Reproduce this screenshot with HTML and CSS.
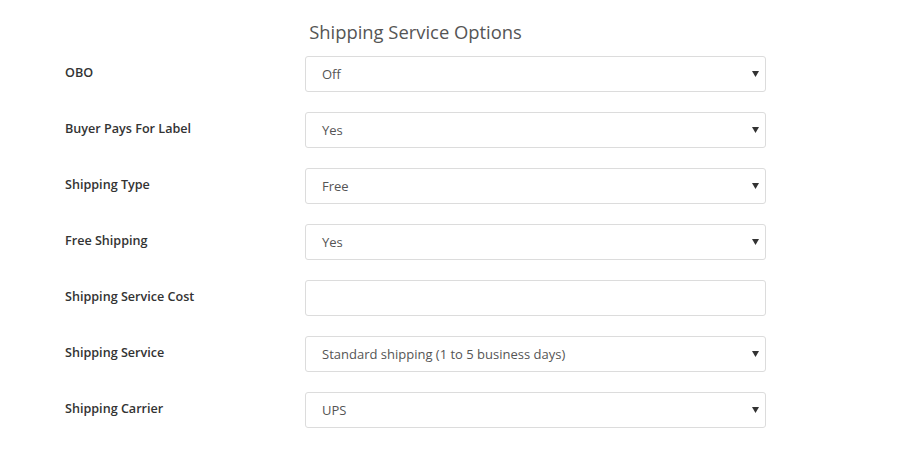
FILE: index.html
```
<!DOCTYPE html>
<html>
<head>
<meta charset="utf-8">
<link rel="stylesheet" href="styles.css">
</head>
<body>
<div class="panel">
  <h2 class="title">Shipping Service Options</h2>
  <div class="rows">
    <div class="row">
      <label class="label">OBO</label>
      <div class="field select"><span class="value">Off</span><svg class="arrow" width="7" height="6" viewBox="0 0 7 6"><path d="M0 0H7L3.5 6Z" fill="#333"/></svg></div>
    </div>
    <div class="row">
      <label class="label">Buyer Pays For Label</label>
      <div class="field select"><span class="value">Yes</span><svg class="arrow" width="7" height="6" viewBox="0 0 7 6"><path d="M0 0H7L3.5 6Z" fill="#333"/></svg></div>
    </div>
    <div class="row">
      <label class="label">Shipping Type</label>
      <div class="field select"><span class="value">Free</span><svg class="arrow" width="7" height="6" viewBox="0 0 7 6"><path d="M0 0H7L3.5 6Z" fill="#333"/></svg></div>
    </div>
    <div class="row">
      <label class="label">Free Shipping</label>
      <div class="field select"><span class="value">Yes</span><svg class="arrow" width="7" height="6" viewBox="0 0 7 6"><path d="M0 0H7L3.5 6Z" fill="#333"/></svg></div>
    </div>
    <div class="row">
      <label class="label">Shipping Service Cost</label>
      <div class="field input"><span class="value"></span></div>
    </div>
    <div class="row">
      <label class="label">Shipping Service</label>
      <div class="field select"><span class="value">Standard shipping (1 to 5 business days)</span><svg class="arrow" width="7" height="6" viewBox="0 0 7 6"><path d="M0 0H7L3.5 6Z" fill="#333"/></svg></div>
    </div>
    <div class="row">
      <label class="label">Shipping Carrier</label>
      <div class="field select"><span class="value">UPS</span><svg class="arrow" width="7" height="6" viewBox="0 0 7 6"><path d="M0 0H7L3.5 6Z" fill="#333"/></svg></div>
    </div>
  </div>
</div>
</body>
</html>
```
FILE: styles.css
```
html, body {
  margin: 0;
  padding: 0;
  background: #fff;
}
body {
  font-family: "Open Sans", "Liberation Sans", sans-serif;
  color: #333;
}
.panel {
  width: 701px;
  margin-left: 65px;
  padding-top: 19px;
}
.title {
  margin: 0 0 11px 0;
  font-size: 18.4px;
  line-height: 26px;
  font-weight: 400;
  color: #555;
  text-align: center;
}
.rows {
  display: flex;
  flex-direction: column;
  gap: 20px;
}
.row {
  display: flex;
  align-items: center;
  height: 36px;
}
.label {
  width: 240px;
  flex: none;
  font-size: 12.6px;
  font-weight: 600;
  color: #333;
  margin-top: -4px;
}
.field {
  flex: 1;
  height: 36px;
  box-sizing: border-box;
  border: 1px solid #dcdcdc;
  border-radius: 3px;
  display: flex;
  align-items: center;
  padding: 0 6px 0 16px;
  background: #fff;
}
.value {
  flex: 1;
  font-size: 13px;
  color: #555;
}
.arrow {
  flex: none;
}
```
